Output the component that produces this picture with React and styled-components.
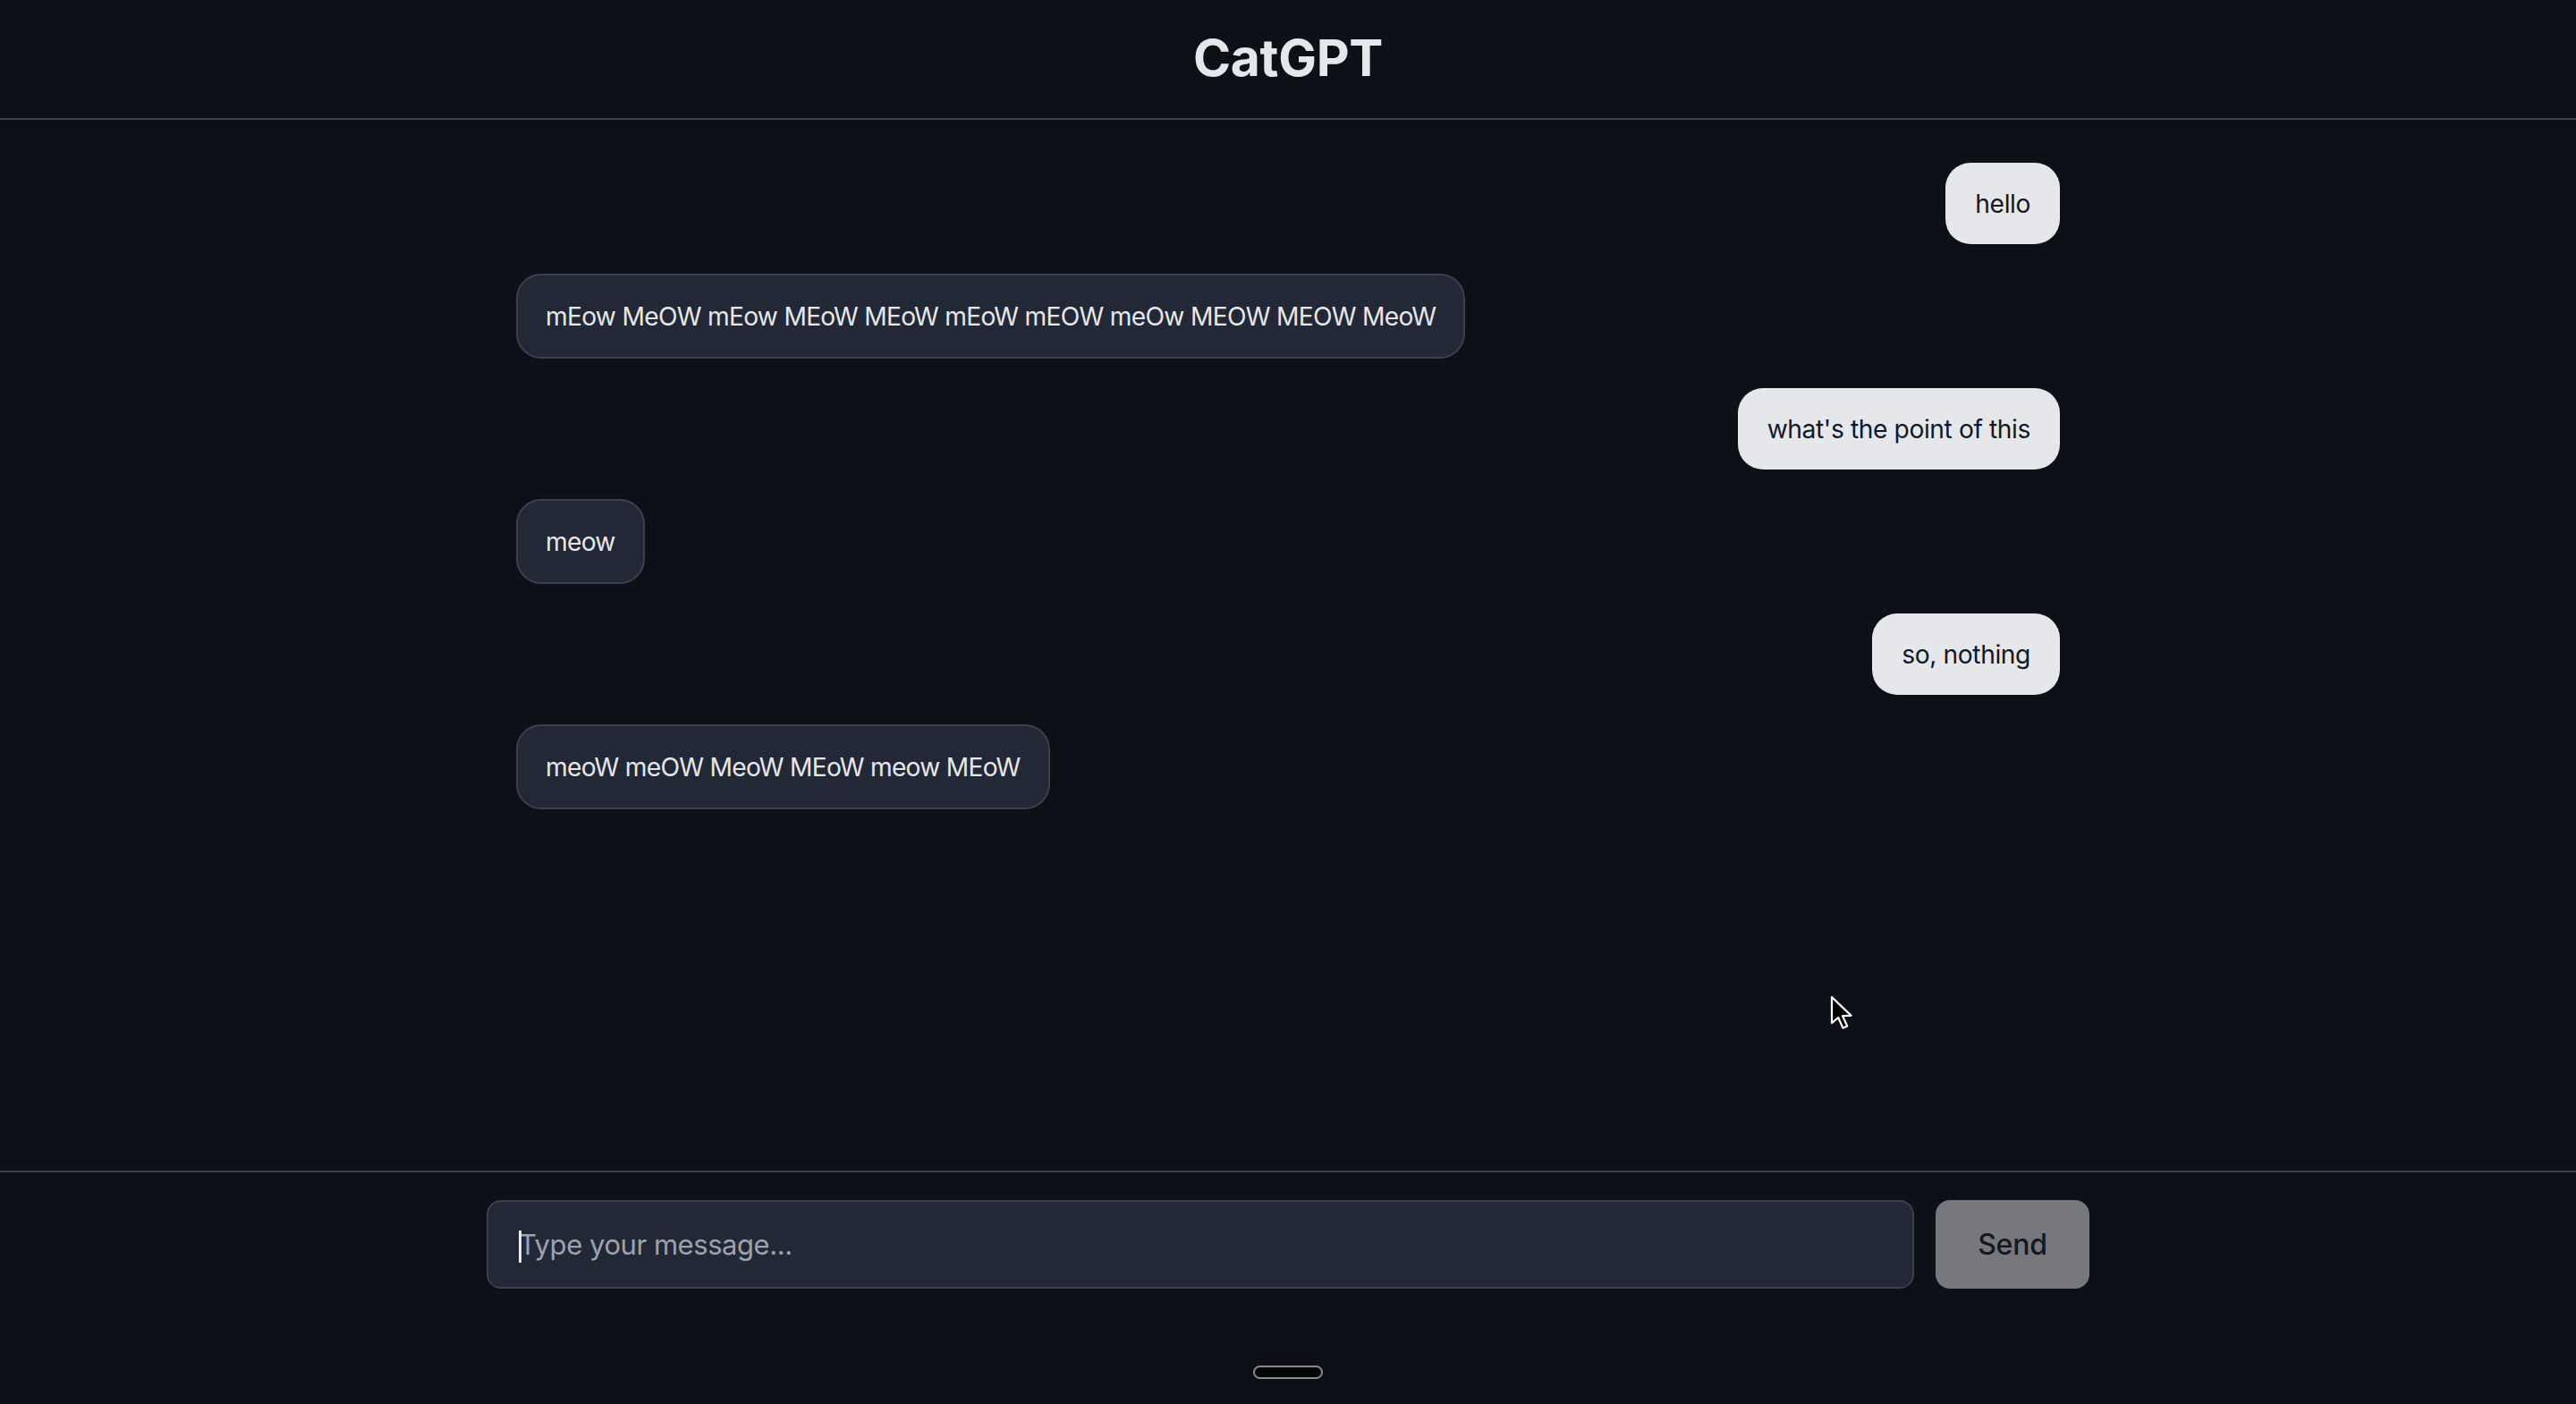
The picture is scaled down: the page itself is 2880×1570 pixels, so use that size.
import React from "react";
import styled, { createGlobalStyle } from "styled-components";

const GlobalStyle = createGlobalStyle`
  html, body {
    margin: 0;
    padding: 0;
    background: #0d1117;
    height: 100%;
  }
  #root { height: 100%; }
  * { box-sizing: border-box; }
`;

const Page = styled.div`
  height: 100vh;
  display: flex;
  flex-direction: column;
  background: #0d1117;
  font-family: Inter, "Noto Sans", sans-serif;
  color: #e5e7eb;
  position: relative;
  overflow: hidden;
`;

const Header = styled.header`
  height: 134px;
  flex: none;
  display: flex;
  align-items: center;
  justify-content: center;
  border-bottom: 2px solid #3a3f4c;
`;

const Title = styled.h1`
  margin: 0;
  font-size: 57px;
  font-weight: 700;
  color: #e5e7eb;
  letter-spacing: -0.3px;
  line-height: 1;
  padding-bottom: 4px;
`;

const Main = styled.main`
  flex: 1;
  overflow: hidden;
  padding-top: 48px;
`;

const Thread = styled.div`
  width: 1726px;
  margin: 0 auto;
  display: flex;
  flex-direction: column;
  gap: 33px;
`;

const Row = styled.div`
  display: flex;
  justify-content: ${(p) => (p.$user ? "flex-end" : "flex-start")};
`;

const Bubble = styled.div`
  font-size: 28.2px;
  letter-spacing: ${(p) => (p.$user ? "-0.4px" : "-0.72px")};
  line-height: 44px;
  border-radius: 28px;
  white-space: nowrap;
  background: ${(p) => (p.$user ? "#e5e7eb" : "#222836")};
  color: ${(p) => (p.$user ? "#111827" : "#e5e7eb")};
  border: ${(p) => (p.$user ? "none" : "2px solid #3a404e")};
  padding: ${(p) => (p.$user ? "23.5px 33px" : "23.5px 31px")};
`;

const Footer = styled.footer`
  height: 261px;
  flex: none;
  border-top: 2px solid #3a3f4c;
  padding-top: 31px;
  display: flex;
  flex-direction: column;
  align-items: center;
`;

const InputRow = styled.form`
  width: 1792px;
  display: flex;
  gap: 24px;
  margin: 0;
`;

const Input = styled.input`
  flex: 1;
  height: 99px;
  background: #222836;
  border: 2px solid #3a404e;
  border-radius: 16px;
  padding: 0 34px;
  font-family: Inter, "Noto Sans", sans-serif;
  font-size: 31px;
  letter-spacing: -0.45px;
  color: #e5e7eb;
  outline: none;
  caret-color: #e5e7eb;
  &::placeholder {
    color: #9ca3af;
  }
`;

const SendButton = styled.button`
  width: 172px;
  height: 99px;
  flex: none;
  border: none;
  border-radius: 16px;
  background: #76787d;
  color: #15181f;
  font-family: Inter, "Noto Sans", sans-serif;
  font-size: 32px;
  font-weight: 500;
  letter-spacing: -0.2px;
  cursor: default;
`;

const Caret = styled.span`
  position: absolute;
  left: 580px;
  top: 1376px;
  width: 3px;
  height: 36px;
  background: #e5e7eb;
`;

const HomePill = styled.div`
  margin-top: 86px;
  width: 78px;
  height: 15px;
  border-radius: 8px;
  background: #050505;
  border: 2px solid #8a8a8a;
`;

const Pointer = styled.svg`
  position: absolute;
  left: 2046px;
  top: 1113px;
  pointer-events: none;
`;

const messages = [
  { user: true, text: "hello" },
  { user: false, text: "mEow MeOW mEow MEoW MEoW mEoW mEOW meOw MEOW MEOW MeoW" },
  { user: true, text: "what's the point of this" },
  { user: false, text: "meow" },
  { user: true, text: "so, nothing" },
  { user: false, text: "meoW meOW MeoW MEoW meow MEoW" },
];

export default function App() {
  return (
    <Page>
      <GlobalStyle />
      <Header>
        <Title>CatGPT</Title>
      </Header>
      <Main>
        <Thread>
          {messages.map((m, i) => (
            <Row key={i} $user={m.user}>
              <Bubble $user={m.user}>{m.text}</Bubble>
            </Row>
          ))}
        </Thread>
      </Main>
      <Footer>
        <InputRow onSubmit={(e) => e.preventDefault()}>
          <Input placeholder="Type your message..." readOnly />
          <SendButton type="submit">Send</SendButton>
        </InputRow>
        <HomePill />
      </Footer>
      <Caret />
      <Pointer width="28" height="40" viewBox="0 0 14 20">
        <path
          d="M1 1 L1 15.5 L4.6 12.4 L7.2 18.3 L9.6 17.2 L7 11.5 L11.8 11.3 Z"
          fill="#000"
          stroke="#fff"
          strokeWidth="1.1"
          strokeLinejoin="round"
        />
      </Pointer>
    </Page>
  );
}
